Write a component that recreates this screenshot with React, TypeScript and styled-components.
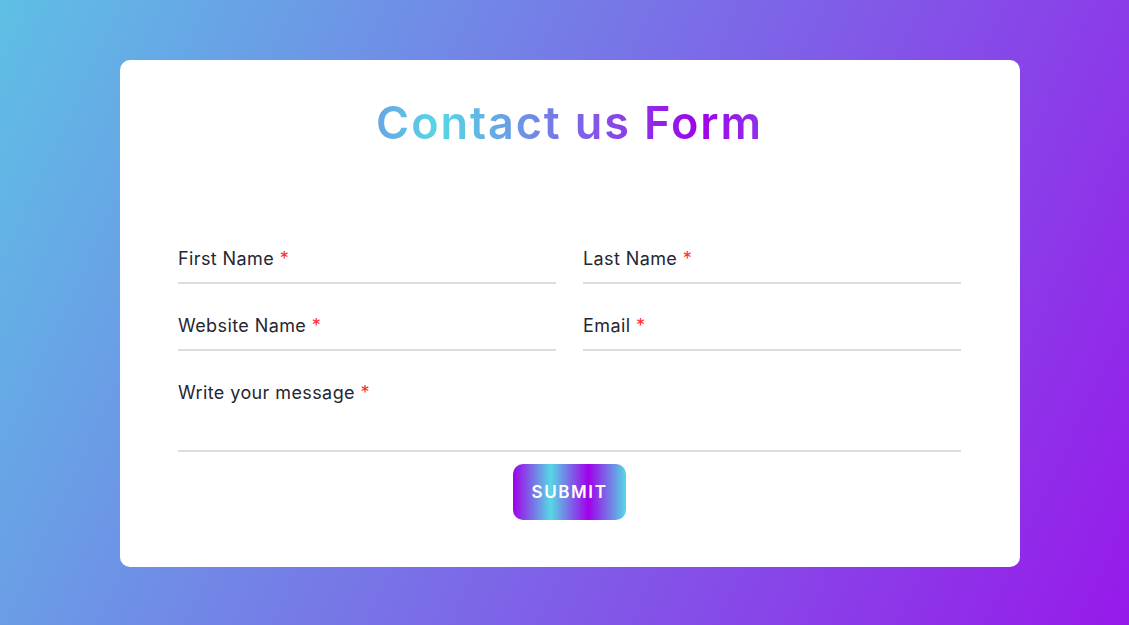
import React from "react";
import styled, { createGlobalStyle } from "styled-components";

const Global = createGlobalStyle`
  html, body { margin: 0; padding: 0; }
  body {
    font-family: "Inter", "Noto Sans", sans-serif;
  }
  * { box-sizing: border-box; }
`;

const Page = styled.div`
  width: 100%;
  height: 625px;
  background: linear-gradient(115deg, #56d8e4 -15%, #9f01ea 115%);
  display: flex;
  justify-content: center;
  padding: 60px 0 0 11px;
`;

const Card = styled.form`
  width: 900px;
  height: 507px;
  background: #fff;
  border-radius: 10px;
  padding: 40px 59px 0 58px;
  display: flex;
  flex-direction: column;
`;

const Title = styled.h1`
  margin: 0;
  font-family: "Inter", sans-serif;
  font-size: 45px;
  font-weight: 600;
  line-height: 45px;
  text-align: center;
  letter-spacing: 1.9px;
  background: linear-gradient(to left, #56d8e4, #9f01ea, #56d8e4, #9f01ea);
  -webkit-background-clip: text;
  background-clip: text;
  -webkit-text-fill-color: transparent;
  color: transparent;
`;

const Fields = styled.div`
  margin-top: 93px;
  display: grid;
  grid-template-columns: 1fr 1fr;
  column-gap: 27px;
  row-gap: 21px;
`;

const Field = styled.div<{ $tall?: boolean; $full?: boolean }>`
  height: ${(p) => (p.$tall ? 80 : 46)}px;
  grid-column: ${(p) => (p.$full ? "1 / -1" : "auto")};
  border-bottom: 2px solid #dddddd;
  padding-top: 12px;
`;

const Label = styled.label`
  display: block;
  font-size: 18px;
  line-height: 17px;
  letter-spacing: 0.4px;
  color: #262633;
  font-weight: 400;
`;

const Star = styled.span`
  color: #ff2d2d;
`;

const Actions = styled.div`
  display: flex;
  justify-content: center;
  margin-top: 12px;
`;

const Submit = styled.button`
  width: 113px;
  height: 56px;
  border: none;
  border-radius: 10px;
  background: linear-gradient(to left, #56d8e4, #9f01ea, #56d8e4, #9f01ea);
  color: #fff;
  font-family: "Inter", sans-serif;
  font-size: 17px;
  font-weight: 600;
  letter-spacing: 1.6px;
  padding: 0;
  cursor: pointer;
`;

const fields = [
  { label: "First Name" },
  { label: "Last Name" },
  { label: "Website Name" },
  { label: "Email" },
];

export default function App() {
  return (
    <>
      <Global />
      <Page>
        <Card onSubmit={(e) => e.preventDefault()}>
          <Title>Contact us Form</Title>
          <Fields>
            {fields.map((f) => (
              <Field key={f.label}>
                <Label>
                  {f.label} <Star>*</Star>
                </Label>
              </Field>
            ))}
            <Field $tall $full>
              <Label>
                Write your message <Star>*</Star>
              </Label>
            </Field>
          </Fields>
          <Actions>
            <Submit type="submit">SUBMIT</Submit>
          </Actions>
        </Card>
      </Page>
    </>
  );
}
